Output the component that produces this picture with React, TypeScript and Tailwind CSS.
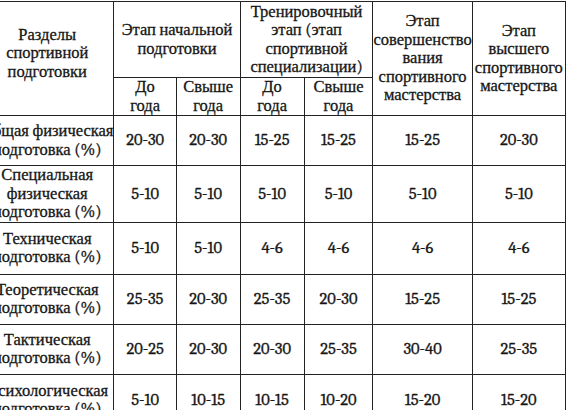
import React from 'react';

// Таблица: соотношение разделов подготовки по этапам (скан)
const rows: { label: string[]; values: string[]; h: string }[] = [
  { label: ['Общая физическая', 'подготовка (%)'], values: ['20-30', '20-30', '15-25', '15-25', '15-25', '20-30'], h: 'h-[50px]' },
  { label: ['Специальная', 'физическая', 'подготовка (%)'], values: ['5-10', '5-10', '5-10', '5-10', '5-10', '5-10'], h: 'h-[56px]' },
  { label: ['Техническая', 'подготовка (%)'], values: ['5-10', '5-10', '4-6', '4-6', '4-6', '4-6'], h: 'h-[52px]' },
  { label: ['Теоретическая', 'подготовка (%)'], values: ['25-35', '20-30', '25-35', '20-30', '15-25', '15-25'], h: 'h-[50px]' },
  { label: ['Тактическая', 'подготовка (%)'], values: ['20-25', '20-30', '20-30', '25-35', '30-40', '25-35'], h: 'h-[50px]' },
  { label: ['Психологическая', 'подготовка (%)'], values: ['5-10', '10-15', '10-15', '10-20', '15-20', '15-20'], h: 'h-[52px]' },
];

const cell = 'border border-[#222] p-0 text-center align-middle whitespace-nowrap font-normal';

function Lines({ items }: { items: string[] }) {
  return (
    <>
      {items.map((t, i) => (
        <div key={i}>{t}</div>
      ))}
    </>
  );
}

export default function App() {
  return (
    <div className="h-[410px] w-[566px] overflow-hidden bg-white pt-[1px] font-serif [font-family:Liberation_Serif,Times_New_Roman,serif] text-[16.5px] leading-[18.5px] text-[#161616] [-webkit-text-stroke:0.3px_#161616]">
      <table className="ml-[-20px] table-fixed border-collapse">
        <colgroup>
          <col className="w-[132px]" />
          <col className="w-[68px]" />
          <col className="w-[67px]" />
          <col className="w-[71px]" />
          <col className="w-[74px]" />
          <col className="w-[98px]" />
          <col className="w-[96px]" />
        </colgroup>
        <thead>
          <tr className="h-[76px]">
            <th rowSpan={2} className={`${cell} pb-[10px]`}>
              <Lines items={['Разделы', 'спортивной', 'подготовки']} />
            </th>
            <th colSpan={2} className={cell}>
              <Lines items={['Этап начальной', 'подготовки']} />
            </th>
            <th colSpan={2} className={cell}>
              <Lines items={['Тренировочный', 'этап (этап', 'спортивной', 'специализации)']} />
            </th>
            <th rowSpan={2} className={cell}>
              <Lines items={['Этап', 'совершенство', 'вания', 'спортивного', 'мастерства']} />
            </th>
            <th rowSpan={2} className={cell}>
              <Lines items={['Этап', 'высшего', 'спортивного', 'мастерства']} />
            </th>
          </tr>
          <tr className="h-[38px]">
            {[0, 1].map(g => (
              <React.Fragment key={g}>
                <th className={cell}>
                  <Lines items={['До', 'года']} />
                </th>
                <th className={cell}>
                  <Lines items={['Свыше', 'года']} />
                </th>
              </React.Fragment>
            ))}
          </tr>
        </thead>
        <tbody>
          {rows.map((r, i) => (
            <tr key={i} className={r.h}>
              <td className={cell}>
                <Lines items={r.label} />
              </td>
              {r.values.map((v, j) => (
                <td key={j} className={cell}>
                  {v}
                </td>
              ))}
            </tr>
          ))}
        </tbody>
      </table>
    </div>
  );
}
